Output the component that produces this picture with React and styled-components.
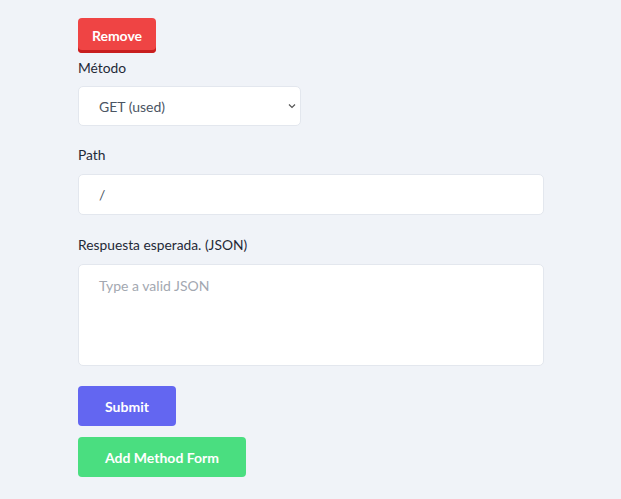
import { createGlobalStyle, styled } from "styled-components";

const GlobalStyle = createGlobalStyle`
  html, body {
    margin: 0;
    padding: 0;
    background: #f0f3f8;
    font-family: "Lato", "Open Sans", sans-serif;
  }
`;

const Page = styled.div`
  min-height: 499px;
  padding: 18px 0 0 78px;
  box-sizing: border-box;
`;

const Form = styled.form`
  width: 466px;
  display: flex;
  flex-direction: column;
  align-items: flex-start;
`;

const Button = styled.button`
  border: none;
  border-radius: 4px;
  color: #fff;
  font-family: inherit;
  font-weight: 700;
  font-size: ${(p) => p.$size || 14}px;
  width: ${(p) => p.$w}px;
  height: ${(p) => p.$h || 40}px;
  background: ${(p) => p.$bg};
  margin-top: ${(p) => p.$mt || 0}px;
  box-shadow: ${(p) => (p.$edge ? `inset 0 -3px 0 ${p.$edge}` : "none")};
  padding: 0;
  cursor: pointer;
`;

const Label = styled.label`
  font-size: 13.8px;
  color: #1f2937;
  margin-top: ${(p) => p.$mt || 0}px;
  line-height: 18px;
`;

const Field = styled.div`
  width: ${(p) => p.$w || 466}px;
  height: ${(p) => p.$h}px;
  margin-top: ${(p) => p.$mt || 0}px;
  background: #fff;
  border: 1px solid #e3e7ee;
  border-radius: 5px;
  box-sizing: border-box;
  display: flex;
  align-items: ${(p) => (p.$top ? "flex-start" : "center")};
  padding: ${(p) => (p.$top ? "12px 20px" : "0 3px 0 20px")};
  font-size: 14px;
  color: ${(p) => (p.$muted ? "#a3a8b1" : "#4b5563")};
`;

const Grow = styled.span`
  flex: 1;
`;

export default function App() {
  return (
    <>
      <GlobalStyle />
      <Page>
        <Form onSubmit={(e) => e.preventDefault()}>
          <Button type="button" $w={78} $h={35} $size={14} $bg="#ef4444" $edge="#c81e1e">
            Remove
          </Button>
          <Label $mt={6}>Método</Label>
          <Field $w={223} $h={40} $mt={9}>
            <Grow>GET (used)</Grow>
            <svg width="10" height="10" viewBox="0 0 10 10">
              <path d="M2 3.5 L5 6.5 L8 3.5" fill="none" stroke="#555" strokeWidth="1.2" />
            </svg>
          </Field>
          <Label $mt={20}>Path</Label>
          <Field $h={41} $mt={10}>/</Field>
          <Label $mt={21}>Respuesta esperada. (JSON)</Label>
          <Field $h={102} $mt={10} $top $muted>
            Type a valid JSON
          </Field>
          <Button type="submit" $w={98} $bg="#6366f1" $mt={20}>
            Submit
          </Button>
          <Button type="button" $w={168} $bg="#4ade80" $mt={11}>
            Add Method Form
          </Button>
        </Form>
      </Page>
    </>
  );
}
